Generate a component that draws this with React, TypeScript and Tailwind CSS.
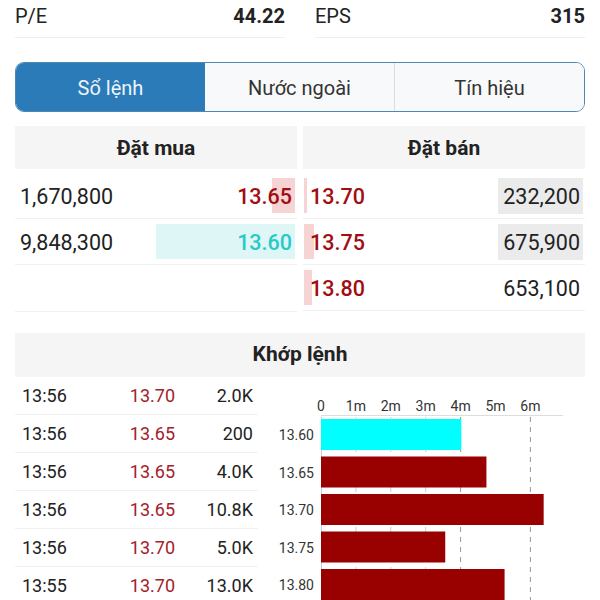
import React from 'react';

const buys = [
  { vol: '1,670,800', price: '13.65', up: true, bar: 23 },
  { vol: '9,848,300', price: '13.60', up: false, bar: 139 },
];

const sells = [
  { price: '13.70', vol: '232,200', bar: 3, grey: true },
  { price: '13.75', vol: '675,900', bar: 10, grey: true },
  { price: '13.80', vol: '653,100', bar: 8, grey: false },
];

const trades = [
  ['13:56', '13.70', '2.0K'],
  ['13:56', '13.65', '200'],
  ['13:56', '13.65', '4.0K'],
  ['13:56', '13.65', '10.8K'],
  ['13:56', '13.70', '5.0K'],
  ['13:55', '13.70', '13.0K'],
];

// volume by price, in millions
const levels = [
  { price: '13.60', value: 4.02, color: '#00ffff' },
  { price: '13.65', value: 4.74, color: '#990000' },
  { price: '13.70', value: 6.38, color: '#990000' },
  { price: '13.75', value: 3.56, color: '#990000' },
  { price: '13.80', value: 5.26, color: '#990000' },
];

function VolumeChart() {
  const x0 = 63;
  const unit = 34.9;
  const ticks = ['0', '1m', '2m', '3m', '4m', '5m', '6m'];
  return (
    <svg width="327" height="230" className="block" style={{ fontFamily: 'Roboto, sans-serif' }}>
      {ticks.map((t, i) => (
        <text key={t} x={x0 + i * unit} y="34" fontSize="14" fill="#333" textAnchor="middle">
          {t}
        </text>
      ))}
      <line x1={x0} y1="38.5" x2="305" y2="38.5" stroke="#ddd" strokeWidth="1" />
      {[1, 2, 3, 4, 6].map((i) => (
        <line
          key={i}
          x1={x0 + i * unit}
          y1="40"
          x2={x0 + i * unit}
          y2="230"
          stroke={i === 4 || i === 6 ? '#999' : '#ccc'}
          strokeWidth="1"
          strokeDasharray="5 5"
        />
      ))}
      <line x1={x0 + 0.5} y1="40" x2={x0 + 0.5} y2="230" stroke="#ccc" strokeWidth="1" />
      {levels.map((l, i) => {
        const y = 42 + i * 37.5;
        return (
          <g key={l.price}>
            <text x="56" y={y + 21} fontSize="14" fill="#333" textAnchor="end">
              {l.price}
            </text>
            <rect x={x0} y={y} width={l.value * unit} height="31" fill={l.color} />
          </g>
        );
      })}
    </svg>
  );
}

export default function App() {
  return (
    <div
      className="w-[600px] h-[600px] overflow-hidden bg-white text-[#222]"
      style={{ fontFamily: 'Roboto, "Noto Sans", sans-serif' }}
    >
      {/* P/E - EPS */}
      <div className="flex gap-[30px] px-[15px]">
        <div className="flex-1 flex justify-between items-center h-[38px] pb-[5px] border-b border-[#eeeeee] text-[20px]">
          <span>P/E</span>
          <span className="font-bold">44.22</span>
        </div>
        <div className="flex-1 flex justify-between items-center h-[38px] pb-[5px] border-b border-[#eeeeee] text-[20px]">
          <span>EPS</span>
          <span className="font-bold">315</span>
        </div>
      </div>

      {/* Tabs */}
      <div className="mx-[15px] mt-[24px] h-[50px] flex rounded-[9px] border-[1.5px] border-[#4f87b0] overflow-hidden text-[20px]">
        <div className="flex-1 flex items-center justify-center pt-[2px] bg-[#2b7bb9] text-[#eef4fa]">Sổ lệnh</div>
        <div className="flex-1 flex items-center justify-center pt-[2px] bg-[#f8f9fa] text-[#333] border-r border-[#dddddd]">
          Nước ngoài
        </div>
        <div className="flex-1 flex items-center justify-center pt-[2px] bg-[#f8f9fa] text-[#333]">Tín hiệu</div>
      </div>

      {/* Order book */}
      <div className="mt-[14px] px-[15px] flex gap-[6px]">
        <div className="flex-1">
          <div className="h-[43px] bg-[#f5f5f5] flex items-center justify-center pt-[2px] font-bold text-[21px]">Đặt mua</div>
          <div className="h-[4px]" />
          {buys.map((b) => (
            <div key={b.vol} className="relative h-[46px] border-b border-[#f0f0f0] flex items-center justify-between pt-[4px] pl-[5px] pr-[5px] text-[21.5px]">
              <div
                className={`absolute right-[2px] top-[5px] bottom-[5px] ${b.up ? 'bg-[#f6d4d4]' : 'bg-[#dff6f6]'}`}
                style={{ width: b.bar }}
              />
              <span className="relative">{b.vol}</span>
              <span className={`relative font-medium ${b.up ? 'text-[#a10d12]' : 'text-[#27c9c9]'}`}>{b.price}</span>
            </div>
          ))}
          <div className="h-[47px] border-b border-[#f0f0f0]" />
        </div>
        <div className="flex-1">
          <div className="h-[43px] bg-[#f5f5f5] flex items-center justify-center pt-[2px] font-bold text-[21px]">Đặt bán</div>
          <div className="h-[4px]" />
          {sells.map((s) => (
            <div key={s.price} className="relative h-[46px] border-b border-[#f0f0f0] flex items-center justify-between pl-[7px] pr-[2px] text-[21.5px]">
              <div className="absolute left-[1px] top-[5px] bottom-[5px] bg-[#f6d4d4]" style={{ width: s.bar }} />
              <span className="relative font-medium text-[#a10d12] pt-[4px]">{s.price}</span>
              <span className={`relative h-[36px] w-[85px] flex items-center justify-end pt-[3px] pr-[3px] ${s.grey ? 'bg-[#ebebeb]' : ''}`}>
                {s.vol}
              </span>
            </div>
          ))}
        </div>
      </div>

      {/* Matched orders */}
      <div className="mt-[21px] mx-[15px] h-[44px] bg-[#f5f5f5] flex items-center justify-center font-bold text-[21px]">
        Khớp lệnh
      </div>
      <div className="flex pl-[15px]">
        <div className="w-[243px]">
          {trades.map((t, i) => (
            <div key={i} className="h-[38px] border-b border-[#f0f0f0] flex items-center text-[18px]">
              <span className="pl-[7px] w-[100px]">{t[0]}</span>
              <span className="w-[60px] text-right text-[#a3222a]">{t[1]}</span>
              <span className="flex-1 text-right pr-[5px]">{t[2]}</span>
            </div>
          ))}
        </div>
        <VolumeChart />
      </div>
    </div>
  );
}
